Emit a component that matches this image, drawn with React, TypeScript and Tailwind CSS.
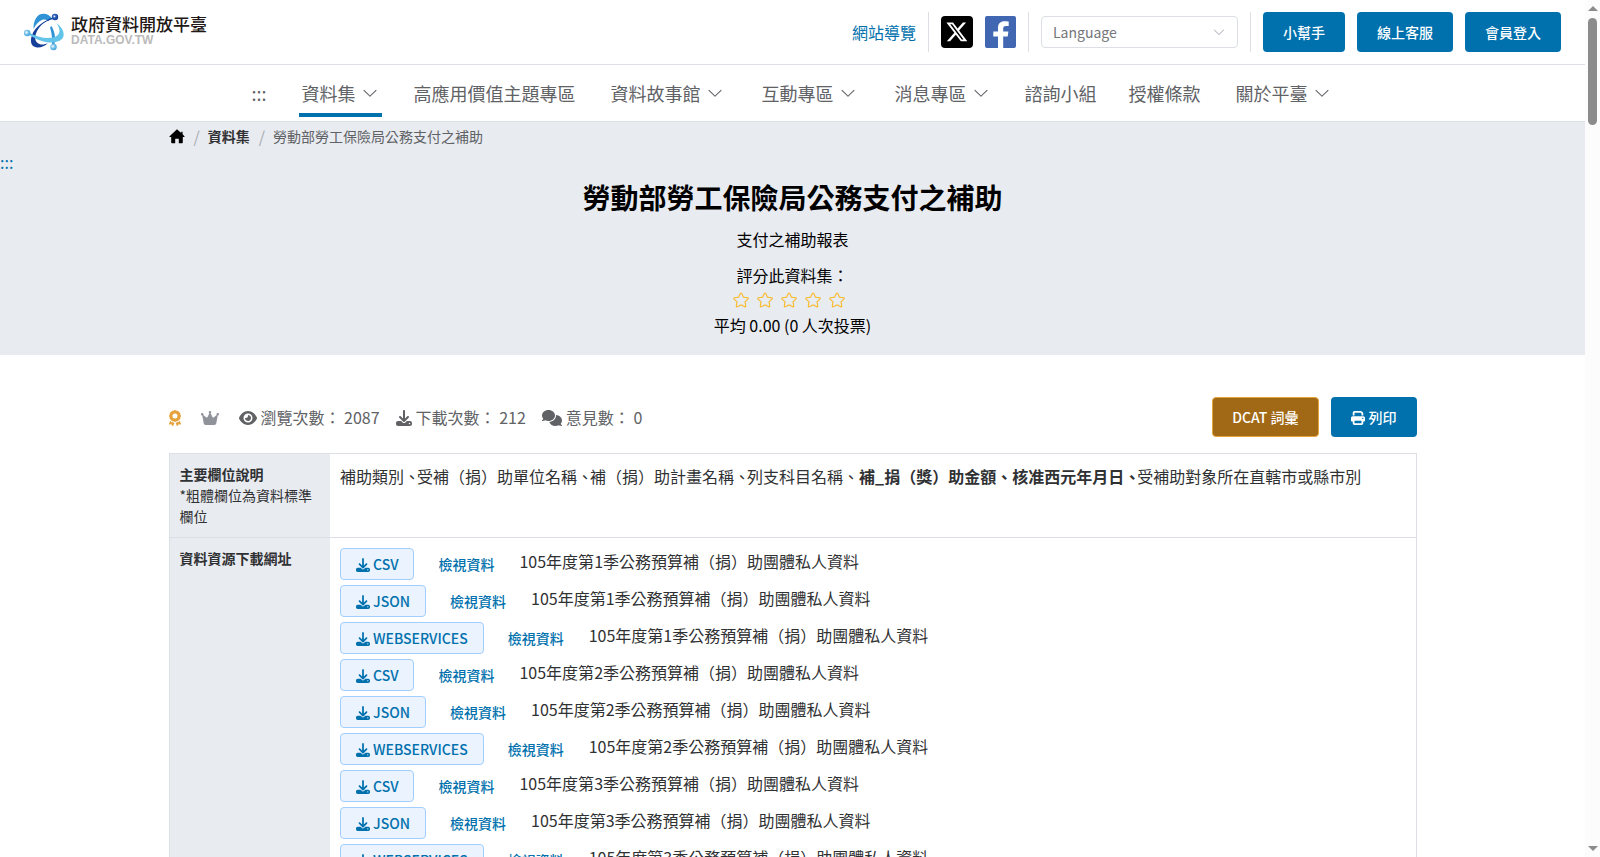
import React from 'react';
import {
  FaAward,
  FaCrown,
  FaEye,
  FaDownload,
  FaComments,
  FaPrint,
} from 'react-icons/fa6';

const navItems = [
  { label: '資料集', menu: true, active: true },
  { label: '高應用價值主題專區' },
  { label: '資料故事館', menu: true },
  { label: '互動專區', menu: true },
  { label: '消息專區', menu: true },
  { label: '諮詢小組' },
  { label: '授權條款' },
  { label: '關於平臺', menu: true },
];

const quarters = [1, 2, 3];
const formats = ['CSV', 'JSON', 'WEBSERVICES'];

const ArrowDown = ({ className }: { className: string }) => (
  <svg viewBox="0 0 1024 1024" fill="currentColor" className={className} aria-hidden="true">
    <path d="M831.872 340.864 512 652.672 192.128 340.864a30.592 30.592 0 0 0-42.752 0 29.12 29.12 0 0 0 0 41.6L489.664 714.24a32 32 0 0 0 44.672 0l340.288-331.712a29.12 29.12 0 0 0 0-41.728 30.592 30.592 0 0 0-42.752 0z" />
  </svg>
);

const StarIcon = () => (
  <svg viewBox="0 0 1024 1024" fill="currentColor" className="size-[18px]" aria-hidden="true">
    <path d="m512 747.84 228.16 119.936a6.4 6.4 0 0 0 9.28-6.72l-43.52-254.08 184.512-179.904a6.4 6.4 0 0 0-3.52-10.88l-255.104-37.12L517.76 147.904a6.4 6.4 0 0 0-11.52 0L392.192 379.072l-255.104 37.12a6.4 6.4 0 0 0-3.52 10.88L318.08 606.976l-43.584 254.08a6.4 6.4 0 0 0 9.28 6.72zM313.6 924.48a70.4 70.4 0 0 1-102.144-74.24l37.888-220.928L88.96 472.96A70.4 70.4 0 0 1 128 352.896l221.76-32.256 99.2-200.96a70.4 70.4 0 0 1 126.208 0l99.2 200.96 221.824 32.256a70.4 70.4 0 0 1 39.04 120.064L774.72 629.376l37.888 220.928a70.4 70.4 0 0 1-102.144 74.24L512 820.096l-198.4 104.32z" />
  </svg>
);

const LogoMark = () => (
  <svg viewBox="0 0 40 38" className="h-[38px] w-10" aria-hidden="true">
    <defs>
      <radialGradient id="ballDark" cx="0.4" cy="0.4" r="0.6">
        <stop offset="0" stopColor="#ffffff" />
        <stop offset="0.4" stopColor="#2d5fb5" />
        <stop offset="1" stopColor="#123f9a" />
      </radialGradient>
      <radialGradient id="ballLight" cx="0.4" cy="0.4" r="0.6">
        <stop offset="0" stopColor="#ffffff" />
        <stop offset="0.5" stopColor="#7cc4ea" />
        <stop offset="1" stopColor="#3fa3dc" />
      </radialGradient>
    </defs>
    <path d="M9.500 16C9.500 7 13 .800 19.500.800c3.500 0 6.500 1.700 8.500 4.700l-4 2.500C22 6.500 20 6.200 18 7 14.500 8.500 12 11 9.500 16z" fill="#2f93d6" />
    <path d="M27.500 13c3.500 6 4.500 13 2.500 20l-2 .500C28.500 27 28 20 26 14.500z" fill="#2f93d6" />
    <path d="M29 4.500C20 7.500 11 14 8 22 5.500 29 7.500 34 13 34.500c4 .300 8-1.500 11-4.500-3 1.500-6 2-8.500 1C11 29.500 10.500 25 12 20.500 14.500 13.500 20 8.500 29 6z" fill="#153f98" />
    <path d="M5 19.500c7 4.500 17 6.500 24 5 7-1.700 8.500-7 3.500-14.500 6 4.500 8.500 10 6.500 14.500-2.500 4.500-9.500 5.500-16 4.700C16.500 28 9 25 4.500 21z" fill="#62c4e8" />
    <circle cx="31" cy="4" r="3.200" fill="url(#ballDark)" />
    <circle cx="3.200" cy="20" r="3.200" fill="url(#ballLight)" />
    <circle cx="29.500" cy="34" r="3.200" fill="url(#ballLight)" />
  </svg>
);

const XIcon = () => (
  <svg viewBox="0 0 32 32" className="size-8" aria-hidden="true">
    <rect width="32" height="32" rx="4" fill="#000" />
    <path
      transform="translate(4.200 4.200) scale(0.970)"
      fill="#fff"
      d="M18.244 2.250h3.308l-7.227 8.260 8.502 11.240H16.170l-5.214-6.817L4.990 21.750H1.680l7.730-8.835L1.254 2.250H8.080l4.713 6.231zm-1.161 17.520h1.833L7.084 4.126H5.117z"
    />
  </svg>
);

const FacebookIcon = () => (
  <svg viewBox="0 0 31 32" className="h-8 w-[31px]" aria-hidden="true">
    <rect width="31" height="32" rx="2" fill="#4267b2" />
    <path d="M13 32V20.500H8.300v-5H13v-3.700c0-4.300 2.500-6.600 6.500-6.600 1.800 0 3 .100 4.200.300v4.500H21c-2.200 0-2.800 1.100-2.800 2.700v2.800h5.200l-.700 5h-4.500V32z" fill="#fff" />
  </svg>
);

const HomeIcon = () => (
  <svg viewBox="0 0 16 15" className="h-[15px] w-4" aria-hidden="true">
    <path d="M8 .300.600 7.200c-.400.400-.100.900.300.900H2.200v5.400c0 .500.300.800.800.800h3.200V9.800h3.600v4.500H13c.500 0 .800-.300.800-.800V8.100h1.300c.400 0 .700-.500.300-.900L13.600 5.300V2.800h-1.400v1.200z" fill="#000" />
  </svg>
);

const Divider = () => <span className="h-10 w-px bg-[#dcdfe6]" />;

const PrimaryButton = ({ children }: { children: React.ReactNode }) => (
  <button
    type="button"
    className="h-10 rounded bg-[#0071ad] px-5 text-sm font-medium text-white"
  >
    {children}
  </button>
);

const TopBar = () => (
  <div className="flex h-[65px] items-center justify-between border-b border-[#dcdfe6] px-6">
    <a href="#" className="flex items-center gap-[7px]">
      <LogoMark />
      <span className="flex flex-col pb-1">
        <span className="text-[17px] leading-5 font-medium text-[#231815]">政府資料開放平臺</span>
        <span className="font-['Liberation_Sans'] text-xs leading-3 font-bold text-[#bbbbbb]">
          DATA.GOV.TW
        </span>
      </span>
    </a>
    <div className="flex items-center gap-3">
      <a href="#" className="text-[#0071ad]">網站導覽</a>
      <Divider />
      <a href="#" aria-label="X"><XIcon /></a>
      <a href="#" aria-label="Facebook"><FacebookIcon /></a>
      <Divider />
      <div className="relative">
        <select
          aria-label="Language"
          className="block h-8 w-[197px] appearance-none rounded border border-[#dcdfe6] bg-white px-[11px] text-sm text-[#73767a]"
        >
          <option>Language</option>
        </select>
        <ArrowDown className="pointer-events-none absolute top-[9px] right-3 size-[14px] text-[#a8abb2]" />
      </div>
      <Divider />
      <PrimaryButton>小幫手</PrimaryButton>
      <PrimaryButton>線上客服</PrimaryButton>
      <PrimaryButton>會員登入</PrimaryButton>
    </div>
  </div>
);

const MainNav = () => (
  <nav className="flex h-[57px] items-end justify-center gap-8 border-b border-[#dcdfe6] pb-1 text-lg text-[#606266]">
    <a href="#" className="pb-[10px]">:::</a>
    {navItems.map((item) => (
      <a
        key={item.label}
        href="#"
        className={`flex items-center gap-[5px] border-b-4 pt-1 pb-[6px] ${
          item.menu ? 'px-[3px]' : ''
        } ${item.active ? 'border-[#0071ad]' : 'border-transparent'}`}
      >
        {item.label}
        {item.menu && <ArrowDown className="size-[18px]" />}
      </a>
    ))}
  </nav>
);

const Hero = () => (
  <section className="bg-[#e8ebf0] pb-[18px] text-black">
    <div className="mx-auto flex h-7 max-w-[1248px] items-center text-sm text-[#606266]">
      <a href="#" aria-label="首頁"><HomeIcon /></a>
      <span className="pr-2 pl-[9px] text-base text-[#a8abb2]">/</span>
      <a href="#" className="font-bold text-[#303133]">資料集</a>
      <span className="pr-2 pl-[9px] text-base text-[#a8abb2]">/</span>
      <span>勞動部勞工保險局公務支付之補助</span>
    </div>
    <a href="#" className="block leading-6 text-[#0071ad]">:::</a>
    <div className="flex flex-col items-center">
      <h1 className="mt-[3px] text-[28px] leading-10 font-bold">勞動部勞工保險局公務支付之補助</h1>
      <p className="mt-[10px]">支付之補助報表</p>
      <p className="mt-3">評分此資料集：</p>
      <div className="flex h-[26px] items-center pr-0.5">
        {[1, 2, 3, 4, 5].map((n) => (
          <button key={n} type="button" aria-label={`${n} 分`} className="mr-[6px] text-[#f7ba2a]">
            <StarIcon />
          </button>
        ))}
      </div>
      <p>平均 0.00 (0 人次投票)</p>
    </div>
  </section>
);

const Stats = () => (
  <div className="flex items-center justify-between">
    <div className="flex items-center text-[#606266]">
      <span className="mr-5 text-[#e6a23c]">
        <FaAward className="inline h-4 w-3 align-[-0.125em]" />
      </span>
      <span className="mr-5 text-[#909399]">
        <FaCrown className="inline h-4 w-[18px] align-[-0.125em]" />
      </span>
      <span className="mr-4">
        <FaEye className="mr-1 inline h-4 w-[18px] align-[-0.125em]" />
        瀏覽次數： 2087
      </span>
      <span className="mr-4">
        <FaDownload className="mr-1 inline size-4 align-[-0.125em]" />
        下載次數： 212
      </span>
      <span>
        <FaComments className="mr-1 inline h-4 w-5 align-[-0.125em]" />
        意見數： 0
      </span>
    </div>
    <div className="flex gap-3">
      <button
        type="button"
        className="h-10 rounded border border-[#e6a23c] bg-[#a16915] px-[19px] text-sm font-medium text-white"
      >
        DCAT 詞彙
      </button>
      <PrimaryButton>
        <FaPrint className="mr-1 inline align-[-0.125em]" />
        列印
      </PrimaryButton>
    </div>
  </div>
);

const Comma = () => <span className="-mr-[3px]">、</span>;

const DataTable = () => (
  <table className="mt-4 w-full border-collapse border border-[#dcdfe6] text-[#303133]">
    <tbody>
      <tr className="border-b border-[#dcdfe6]">
        <th scope="row" className="w-[161px] bg-[#e8ebf0] p-[10px] text-left align-top text-sm leading-[21px]">
          主要欄位說明
          <span className="block font-normal">*粗體欄位為資料標準欄位</span>
        </th>
        <td className="p-[10px] align-top leading-6">
          補助類別<Comma />受補（捐）助單位名稱<Comma />補（捐）助計畫名稱<Comma />
          列支科目名稱、<b>補_捐（獎）助金額、核准西元年月日<Comma /></b>
          受補助對象所在直轄市或縣市別
        </td>
      </tr>
      <tr>
        <th scope="row" className="bg-[#e8ebf0] p-[10px] text-left align-top text-sm leading-[21px]">
          資料資源下載網址
        </th>
        <td className="p-[10px] align-top">
          <ul className="flex flex-col gap-[5px]">
            {quarters.map((q) =>
              formats.map((format) => (
                <li key={`${q}-${format}`} className="flex h-8 gap-6">
                  <button
                    type="button"
                    className="rounded border border-[#a0cfff] bg-[#ebf3ff] px-[15px] text-sm font-medium text-[#0071ad]"
                  >
                    <FaDownload className="mr-[3px] inline align-[-0.125em]" />
                    {format}
                  </button>
                  <a href="#" className="self-center pr-px text-sm font-medium text-[#0071ad]">檢視資料</a>
                  <span className="leading-[26px]">105年度第{q}季公務預算補（捐）助團體私人資料</span>
                </li>
              )),
            )}
          </ul>
        </td>
      </tr>
    </tbody>
  </table>
);

const ScrollBar = () => (
  <div className="flex w-[15px] shrink-0 flex-col items-center justify-between bg-[#fcfcfc] py-[6px]">
    <div className="flex flex-col items-center gap-[7px]">
      <svg viewBox="0 0 10 5" className="h-[5px] w-[10px]"><path d="M0 5 5 0l5 5z" fill="#8b8b8b" /></svg>
      <div className="h-[107px] w-[9px] rounded-full bg-[#8b8b8b]" />
    </div>
    <svg viewBox="0 0 10 5" className="h-[5px] w-[10px]"><path d="M0 0 5 5l5-5z" fill="#8b8b8b" /></svg>
  </div>
);

const App = () => {
  return (
    <div className="flex h-screen overflow-hidden bg-white font-['Noto_Sans_CJK_TC',sans-serif] text-base" lang="zh-Hant">
      <div className="min-w-0 flex-1 overflow-hidden">
        <header>
          <TopBar />
          <MainNav />
        </header>
        <Hero />
        <main className="mx-auto max-w-[1248px] pt-[42px]">
          <Stats />
          <DataTable />
        </main>
      </div>
      <ScrollBar />
    </div>
  );
};

export default App;
